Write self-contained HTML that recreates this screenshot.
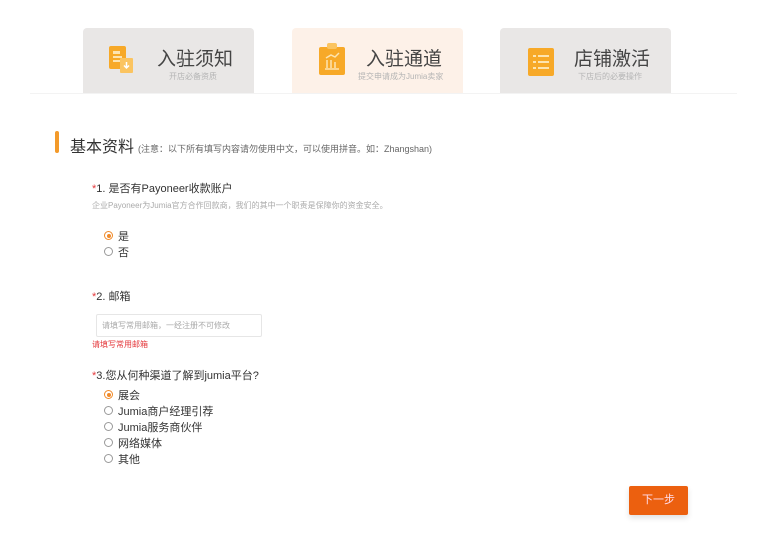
<!DOCTYPE html>
<html><head><meta charset="utf-8"><style>
*{margin:0;padding:0;box-sizing:border-box}
body{width:779px;height:542px;background:#fff;font-family:"Liberation Sans","Noto Sans CJK SC",sans-serif;position:relative;overflow:hidden;color:#333}
.tab{position:absolute;top:28px;width:171px;height:65px;background:#e9e7e6;border-radius:4px 4px 0 0}
.tab.act{background:#fdf1e8}
.tab .t{position:absolute;left:74px;top:16px;font-size:19px;color:#444;letter-spacing:0}
.tab .s{position:absolute;top:43px;font-size:8px;color:#b5b5b5;white-space:nowrap}
.ico{position:absolute;left:26px;top:18px}
.line{position:absolute;left:30px;top:93px;width:707px;height:1px;background:#f3f3f3}
.abs{position:absolute;white-space:nowrap}
.r{position:absolute;width:9px;height:9px;border:1px solid #999;border-radius:50%}
.r.on{border-color:#f08a2a}
.r.on::after{content:"";position:absolute;left:1.5px;top:1.5px;width:4px;height:4px;border-radius:50%;background:#f08a2a}
.star{color:#e4393c}
</style></head><body>
<div class="tab" style="left:83px">
<svg class="ico" width="28" height="30" viewBox="0 0 28 30"><rect x="0" y="0" width="17" height="23" rx="2" fill="#f7a928"/><rect x="4" y="5" width="7" height="3" fill="#fde4b0"/><rect x="4" y="10" width="9" height="2" fill="#fde4b0"/><rect x="4" y="14" width="7" height="2" fill="#fde4b0"/><rect x="11" y="12" width="13" height="15" rx="1" fill="#fbc460"/><path d="M17.5 16v6M15 19.5l2.5 2.5 2.5-2.5" stroke="#fff" stroke-width="1.5" fill="none"/></svg>
<div class="t">入驻须知</div><div class="s" style="left:86px">开店必备资质</div></div>
<div class="tab act" style="left:292px">
<svg class="ico" width="28" height="32" viewBox="0 0 28 32" style="left:27px;top:15px"><rect x="0" y="4" width="26" height="28" rx="2" fill="#f7a928"/><rect x="8" y="0" width="10" height="6" rx="2" fill="#fbc460"/><path d="M6 26h14M8 25v-8M12 25v-8M16 25v-6M7 15l5-3 4 2 4-4" stroke="#fde4b0" stroke-width="1.5" fill="none"/></svg>
<div class="t">入驻通道</div><div class="s" style="left:66px">提交申请成为Jumia卖家</div></div>
<div class="tab" style="left:500px">
<svg class="ico" width="26" height="28" viewBox="0 0 26 28" style="top:20px;left:28px"><rect x="0" y="0" width="26" height="28" rx="2" fill="#f7a928"/><g fill="#fde4b0"><rect x="5" y="7" width="3" height="2"/><rect x="10" y="7" width="11" height="2"/><rect x="5" y="13" width="3" height="2"/><rect x="10" y="13" width="11" height="2"/><rect x="5" y="19" width="3" height="2"/><rect x="10" y="19" width="11" height="2"/></g></svg>
<div class="t">店铺激活</div><div class="s" style="left:78px">下店后的必要操作</div></div>
<div class="line"></div>

<div class="abs" style="left:55px;top:131px;width:4px;height:22px;background:#f39a2a;border-radius:2px"></div>
<div class="abs" style="left:70px;top:133px;font-size:16px;color:#333">基本资料<span style="font-size:9px;color:#666;margin-left:4px">(注意：以下所有填写内容请勿使用中文，可以使用拼音。如：Zhangshan)</span></div>

<div class="abs" style="left:92px;top:180px;font-size:11px"><span class="star">*</span>1. 是否有Payoneer收款账户</div>
<div class="abs" style="left:92px;top:200px;font-size:8px;color:#aaa">企业Payoneer为Jumia官方合作回款商，我们的其中一个职责是保障你的资金安全。</div>
<div class="r on" style="left:104px;top:231px"></div><div class="abs" style="left:118px;top:228px;font-size:11px">是</div>
<div class="r" style="left:104px;top:247px"></div><div class="abs" style="left:118px;top:244px;font-size:11px">否</div>

<div class="abs" style="left:92px;top:288px;font-size:11px"><span class="star">*</span>2. 邮箱</div>
<div class="abs" style="left:96px;top:314px;width:166px;height:23px;border:1px solid #e6e6e6;border-radius:2px"></div>
<div class="abs" style="left:102px;top:320px;font-size:8px;color:#aaa">请填写常用邮箱，一经注册不可修改</div>
<div class="abs" style="left:92px;top:339px;font-size:8px;color:#e4393c">请填写常用邮箱</div>

<div class="abs" style="left:92px;top:367px;font-size:11px"><span class="star">*</span>3.您从何种渠道了解到jumia平台?</div>
<div class="r on" style="left:104px;top:390px"></div><div class="abs" style="left:118px;top:387px;font-size:11px">展会</div>
<div class="r" style="left:104px;top:406px"></div><div class="abs" style="left:118px;top:403px;font-size:11px">Jumia商户经理引荐</div>
<div class="r" style="left:104px;top:422px"></div><div class="abs" style="left:118px;top:419px;font-size:11px">Jumia服务商伙伴</div>
<div class="r" style="left:104px;top:438px"></div><div class="abs" style="left:118px;top:435px;font-size:11px">网络媒体</div>
<div class="r" style="left:104px;top:454px"></div><div class="abs" style="left:118px;top:451px;font-size:11px">其他</div>

<div class="abs" style="left:629px;top:486px;width:59px;height:29px;background:#ec600f;border-radius:2px;color:#fde;font-size:11px;text-align:center;line-height:29px;box-shadow:0 3px 6px rgba(0,0,0,.12)">下一步</div>
</body></html>
